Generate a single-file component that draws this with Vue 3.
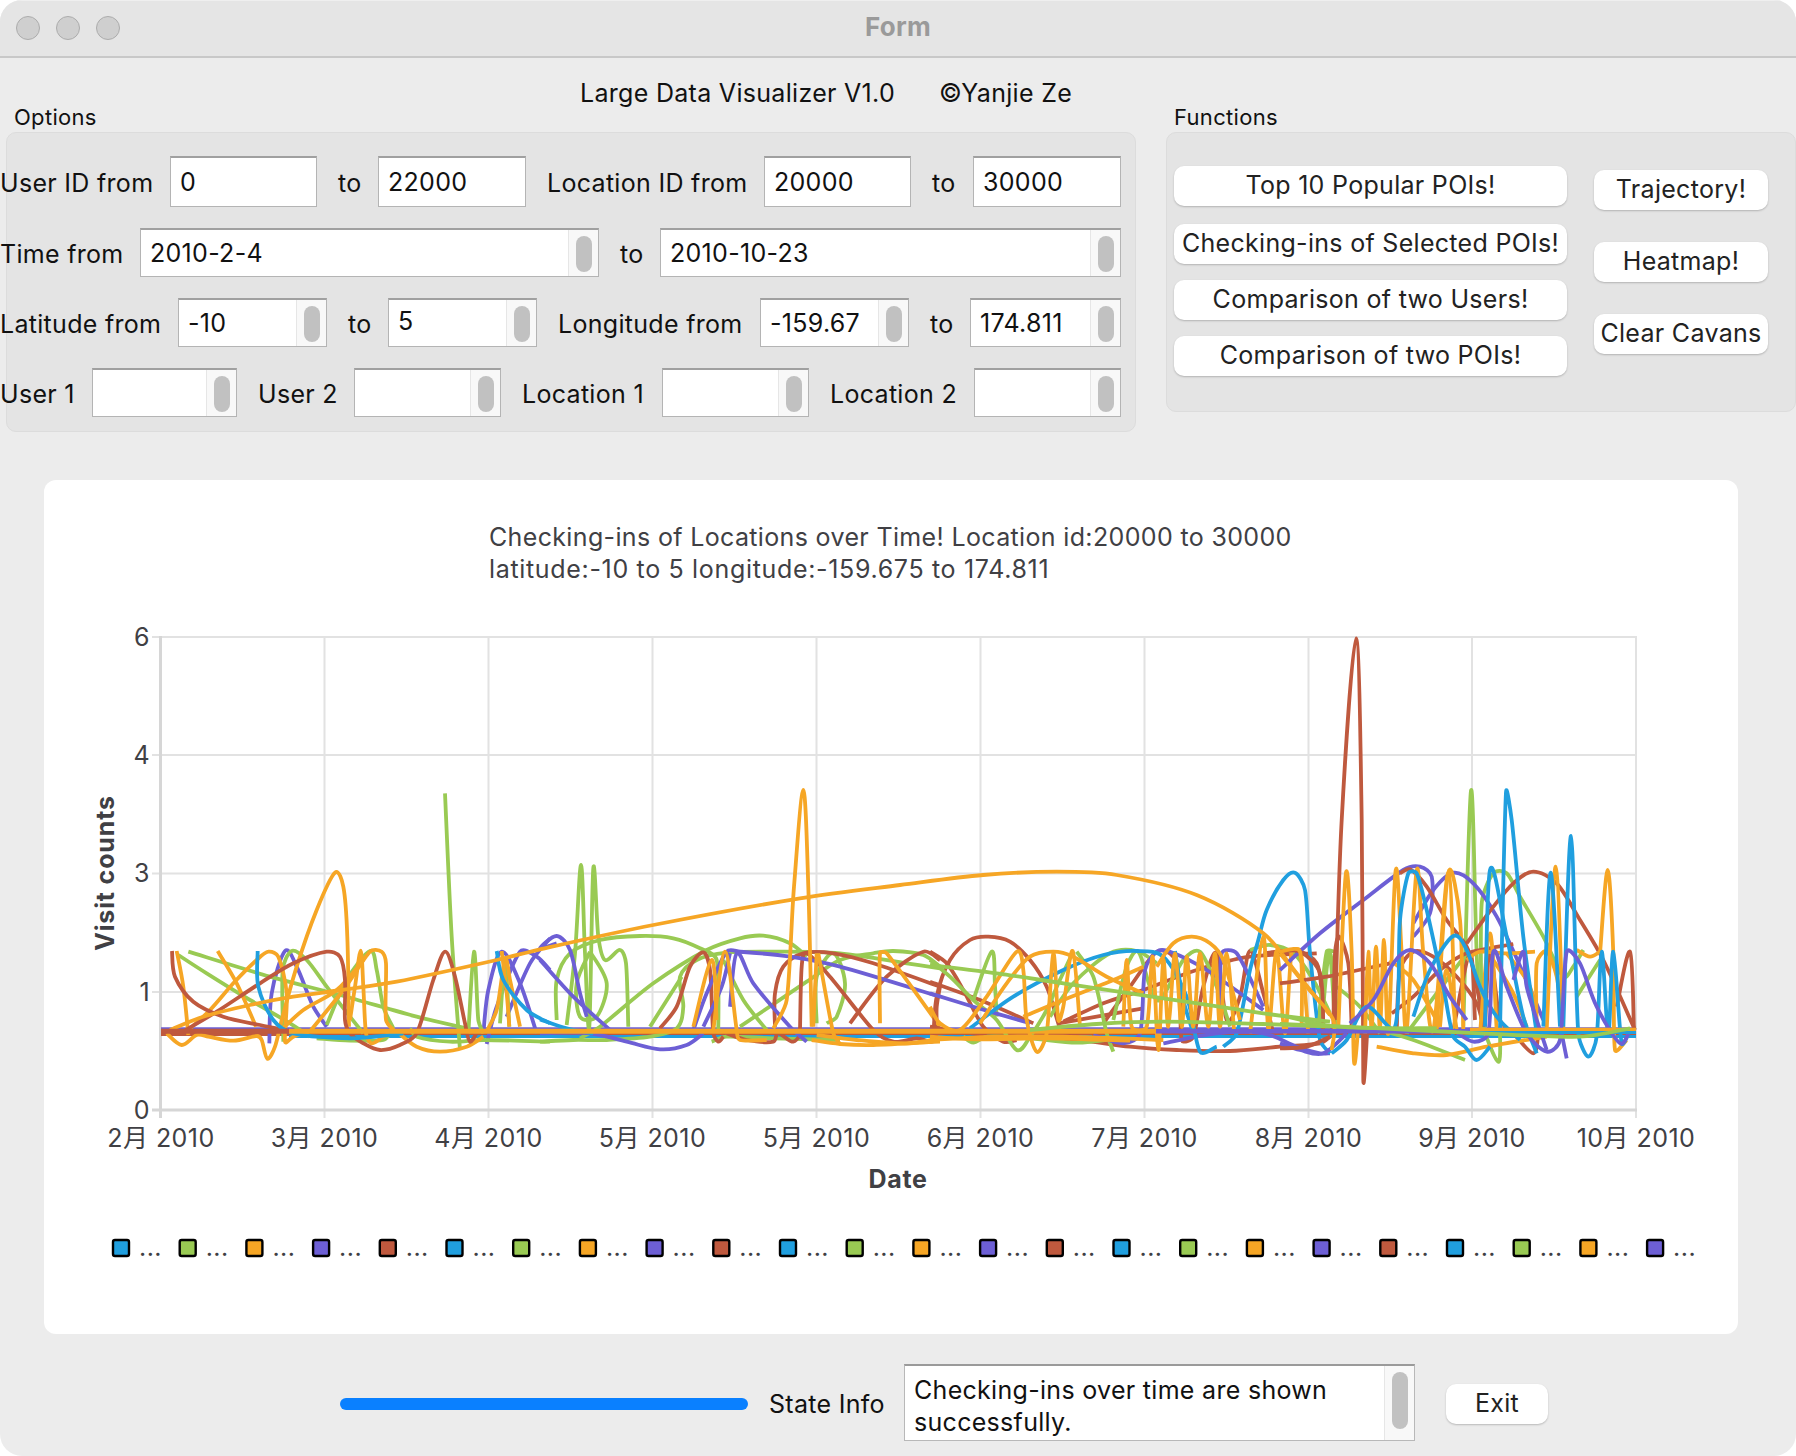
<script setup>
const COL = { b: '#209fdf', g: '#99ca53', o: '#f6a625', p: '#6d5fd5', r: '#bf593e' }
const BASE = [150, 540, 930, 1280]

// Each curve: colour, panel, points in 3x-zoom coordinates of that panel
const raw = [
  // panel 1
  ['p',0,'358,670 365,520 405,393 440,440 490,560 530,620'],
  ['p',0,'1000,640 1015,510 1055,395 1110,490 1160,640'],
  ['p',0,'1010,672 1040,560 1110,395 1160,410 1200,450'],
  ['p',0,'1070,590 1140,430 1200,355'],
  ['g',0,'85,405 170,460 300,540 420,610 480,650'],
  ['g',0,'115,395 360,470 570,525 800,590 950,625'],
  ['g',0,'400,665 398,450 425,393 470,420 530,500 600,590 640,640'],
  ['g',0,'530,615 590,480 660,393 680,450 700,560 730,625'],
  ['g',0,'885,-80 905,350 930,690'],
  ['g',0,'955,640 972,395 985,600 1000,640'],
  ['g',0,'1050,610 1065,430 1078,620'],
  ['g',0,'780,625 800,650 900,665 1000,660 1200,665'],
  ['g',0,'500,655 600,662 700,660 720,640'],
  ['o',0,'50,640 95,675 140,645 175,650 250,662 320,648 335,660 352,716 375,680 395,600 440,440 500,270 555,158 580,200 592,350 597,620'],
  ['o',0,'80,393 100,500 115,645'],
  ['o',0,'203,393 260,490 318,620'],
  ['o',0,'110,634 180,570 250,490 320,420 355,395 385,410 410,520 405,665 430,650 480,634'],
  ['o',0,'390,634 460,570 560,510 640,420'],
  ['o',0,'600,600 615,500 632,392 640,500 648,640 665,670 700,650 740,634'],
  ['o',0,'480,634 580,510 660,395 695,395 708,430 708,600 735,634'],
  ['o',0,'740,634 800,680 870,695 950,680 1000,650'],
  ['o',0,'1010,634 1040,570 1065,420 1080,480 1110,620'],
  ['o',0,'1055,393 1070,520 1078,620'],
  ['r',0,'66,393 75,470 130,545 220,590 330,615 410,630'],
  ['r',0,'100,634 200,575 330,490 430,430 530,395 570,410 585,480 585,600 600,640 640,670 690,690 750,675 800,640 850,480 885,395 915,470 945,610 960,665 985,630'],
  ['b',0,'323,393 325,500 370,600 430,640 600,655 760,640'],
  ['b',0,'1040,393 1060,480 1130,570 1200,610'],
  // panel 2
  ['g',1,'0,665 100,660 200,660 330,650 410,625 430,560 420,470 470,420 560,398 700,395 900,400 1100,430 1200,445'],
  ['g',1,'120,655 180,620 340,490 500,390 600,355 670,347 750,370 800,410'],
  ['g',1,'50,600 50,480 90,400 180,360 300,348 400,355 480,385 530,420 535,640'],
  ['g',1,'80,615 105,400 123,135 135,400 148,620 160,145 175,350 195,420 240,390 258,430 265,620'],
  ['g',1,'150,395 200,490 170,590 120,590 110,490 150,395'],
  ['g',1,'600,620 800,485 900,420 1000,400 1060,393 1150,405 1200,440'],
  ['g',1,'830,610 830,470 880,400 915,490 890,590 860,610'],
  ['g',1,'550,420 610,540 680,630'],
  ['g',1,'330,620 425,470'],
  ['g',1,'515,665 560,650 700,655 900,660'],
  ['r',1,'360,625 410,560 450,440 490,397 510,450 520,640 535,665 550,650'],
  ['r',1,'705,620 705,520 730,440 790,400 880,400 1000,430 1200,500'],
  ['r',1,'780,630 785,440 800,400 870,470 1000,630 1060,665 1130,655 1185,660 1190,560 1200,500'],
  ['r',1,'930,610 1040,470 1150,395 1200,420'],
  ['r',1,'560,640 620,660 700,665 715,640 760,665 790,630'],
  ['p',1,'0,420 100,530 210,630'],
  ['p',1,'0,640 150,640 260,665 360,688 440,675 490,640'],
  ['p',1,'460,630 500,520 560,395 600,395 750,410 900,440 1200,530'],
  ['p',1,'570,560 590,400 640,490 750,620 800,665'],
  ['p',1,'490,620 545,500 570,400'],
  ['p',1,'50,370 0,385 50,348 90,390 120,520 140,590'],
  ['o',1,'700,625 740,540 762,200 790,-90 805,200 815,620'],
  ['o',1,'520,630 555,395 590,630 600,660 680,660'],
  ['o',1,'460,620 515,420 530,600'],
  ['o',1,'830,400 820,620'],
  ['o',1,'835,400 880,640 900,672'],
  ['o',1,'1020,610 1020,400 1040,400 1200,620'],
  ['o',1,'815,660 900,672 1000,675 1200,665'],
  ['o',1,'830,645 950,660 1100,670 1200,655'],
  ['b',1,'0,598 80,625 160,640'],
  // panel 3
  ['r',2,'10,660 20,530 60,420 120,360 175,350 240,365 300,420 350,500 385,610 405,660 430,645 470,665 500,640'],
  ['r',2,'0,395 50,430 100,510 160,620 220,665 260,660'],
  ['r',2,'0,485 150,540 310,610'],
  ['r',2,'400,605 520,550 640,510 800,450 960,410 1160,400'],
  ['r',2,'385,610 500,590 640,565'],
  ['r',2,'520,610 600,500 680,395 730,410 750,500 755,660 790,650 820,500 860,400 890,600 930,530 960,393 1000,520 1030,640'],
  ['r',2,'0,620 200,650 400,655 600,680 740,690 900,693 1050,680 1170,670 1200,650'],
  ['r',2,'1000,400 1100,393 1160,430 1175,520 1180,620'],
  ['g',2,'0,420 60,470 130,540 200,600 260,690 300,650 350,570 385,490 430,394'],
  ['g',2,'130,540 185,395 195,500 200,590'],
  ['g',2,'360,590 430,490 540,400 620,393 680,430'],
  ['g',2,'440,395 490,470 530,640 550,695'],
  ['g',2,'550,600 590,440 625,395 660,500 690,540 760,420 810,395 860,500 900,620'],
  ['g',2,'960,390 1020,375 1090,400 1150,480 1200,580'],
  ['g',2,'1165,610 1190,395 1215,395'],
  ['g',2,'100,650 130,668 170,650 300,655 440,668 560,655'],
  ['p',2,'0,520 130,560 300,610'],
  ['p',2,'490,645 580,670 630,640 645,450 680,395 720,395 830,450 1000,570'],
  ['p',2,'700,670 860,640 1000,640 1100,680 1170,700 1200,700'],
  ['p',2,'870,600 875,400 920,400 1000,560'],
  ['b',2,'120,625 250,530 400,450 520,405 620,393 700,410 770,530 810,695 860,680'],
  ['b',2,'880,680 920,640 960,450 985,360 1010,270 1060,180 1095,158 1125,210 1140,400 1170,660 1200,700'],
  ['b',2,'735,393 760,540 790,640'],
  ['o',0,'60,630 160,590 300,555 430,530 575,510 740,485 1040,420 1170,388 1510,315 1950,235 2250,195 2500,165 2720,155 2900,165 3140,225 3340,340 3440,460 3540,585'],
  ['o',2,'0,560 30,610 90,630 170,530 260,395 280,450 290,600 320,695 350,640 370,400 385,600 400,560 428,393 450,620'],
  ['o',2,'150,610 230,490 300,410 370,395 430,410 530,470 640,520'],
  ['o',2,'280,590 400,540 550,480 640,440'],
  ['o',2,'580,620 590,420 605,620 650,620 668,410 685,690 700,420 715,620 735,400 755,620 770,410 790,620 810,400 835,620 855,400 870,620 890,400 912,630'],
  ['o',2,'680,440 730,370 785,350 840,370 880,420 930,600'],
  ['o',2,'960,640 1000,350 1015,630 1040,393 1065,640 1085,393 1112,393 1135,640'],
  ['o',2,'0,660 200,650 400,650 700,660'],
  ['o',2,'0,650 150,658 350,655 600,662'],
  // panel 4
  ['g',3,'115,620 148,395 175,620'],
  ['g',3,'125,620 148,400 165,620'],
  ['g',3,'550,620 573,-88 590,400 605,600 655,725 660,620'],
  ['g',3,'605,620 605,250 640,160 680,160 720,230 790,350 850,470 880,440 910,390'],
  ['g',3,'890,530 960,420'],
  ['g',3,'300,630 400,660 555,720'],
  ['g',3,'170,500 240,560 300,640'],
  ['g',3,'380,640 500,480 560,400'],
  ['p',3,'0,450 120,340 250,240 370,150 420,140 455,170 450,280 400,350'],
  ['p',3,'400,310 460,210 520,158 580,190 650,290 730,460 790,600'],
  ['p',3,'0,670 60,690 130,700 200,640'],
  ['r',3,'165,600 185,0 228,-545 245,0 250,780 262,630'],
  ['r',3,'160,640 165,400 178,350 205,430 215,620'],
  ['r',3,'360,160 390,148 440,200 500,300 560,380 580,450 610,600'],
  ['r',3,'560,370 640,260 700,190 760,155 830,190 900,300 970,420 1065,630'],
  ['r',3,'335,580 400,530 480,450 560,400 700,372'],
  ['r',3,'350,640 360,450 400,395 460,410 530,470 590,550 610,620'],
  ['r',3,'1010,560 1050,395 1062,630'],
  ['r',3,'520,630 570,400 585,600'],
  ['r',3,'615,620 630,395 660,600 700,640 760,700 775,640'],
  ['r',3,'0,395 60,395 120,460 130,640'],
  ['r',3,'0,490 140,470 330,430'],
  ['r',3,'0,685 80,680 150,650'],
  ['o',3,'175,620 198,158 215,400 222,725 235,620'],
  ['o',3,'255,640 265,395 275,630 288,380 300,630 312,360 325,640 347,150 365,400 380,630 410,150 430,400 460,630 505,158 525,630'],
  ['o',3,'470,630 505,158 540,300 550,630'],
  ['o',3,'600,640 630,340 650,630'],
  ['o',3,'680,400 750,500 770,620'],
  ['o',3,'560,420 600,395 680,400 765,395'],
  ['o',3,'770,620 770,430 800,395 830,470 850,620'],
  ['o',3,'800,630 827,140 850,640'],
  ['o',3,'960,400 983,150 1000,400 1005,690 1040,660'],
  ['o',3,'890,390 930,410 960,395'],
  ['o',3,'290,680 400,700 500,705 620,680 800,650'],
  ['o',3,'0,395 60,395 65,620'],
  ['o',3,'0,400 80,500 160,600 155,690'],
  ['o',3,'330,420 400,480 480,620'],
  ['o',3,'640,420 700,520 740,620'],
  ['o',3,'480,620 500,450 530,630'],
  ['b',3,'155,700 200,660 260,560 345,620 360,300 385,160 410,160 440,270 490,500 520,650 555,680 590,720 630,680'],
  ['b',3,'400,590 450,450 520,348 560,390 600,500 650,590 720,660'],
  ['b',3,'615,620 630,150 680,350 730,590 770,700'],
  ['b',3,'660,630 678,-84 695,0 730,350 770,640'],
  ['b',3,'790,620 812,158 840,620'],
  ['b',3,'850,620 873,48 895,640 925,710 950,650 965,395 985,640 1000,395 1025,670 1050,630'],
  ['p',3,'210,610 280,540 340,430 390,390 450,430 510,530 560,600'],
  ['p',3,'520,630 580,665 625,640 640,395 680,500 740,640 800,695 840,660 860,395 900,430 950,560 1020,670 1050,630'],
  ['p',3,'700,480 730,395 740,500 800,690'],
  ['p',3,'860,715 845,640'],
]

function toPath(pts) {
  let d = `M${pts[0][0]} ${pts[0][1]}`
  for (let i = 0; i < pts.length - 1; i++) {
    const p0 = pts[Math.max(i - 1, 0)]
    const p1 = pts[i]
    const p2 = pts[i + 1]
    const p3 = pts[Math.min(i + 2, pts.length - 1)]
    const seg = Math.hypot(p2[0] - p1[0], p2[1] - p1[1])
    const lim = (a, b) => {
      const dx = b[0] - a[0]
      const dy = b[1] - a[1]
      const len = Math.hypot(dx, dy) || 1
      const k = Math.min(len / 6, seg / 3) / len
      return [dx * k, dy * k]
    }
    const t1 = lim(p0, p2)
    const t2 = lim(p1, p3)
    const f = (n) => n.toFixed(1)
    d += `C${f(p1[0] + t1[0])} ${f(p1[1] + t1[1])} ${f(p2[0] - t2[0])} ${f(p2[1] - t2[1])} ${f(p2[0])} ${f(p2[1])}`
  }
  return d
}

const parse = (panel, s) =>
  s.split(' ').map((q) => {
    const [x, y] = q.split(',').map(Number)
    return [BASE[panel] + x / 3, 820 + y / 3]
  })

const curves = raw.map(([c, panel, s]) => ({ color: COL[c], d: toPath(parse(panel, s)) }))

const flats = [
  { color: COL.p, x1: 161, x2: 1636, y: 1028.5, w: 2.5 },
  { color: COL.r, x1: 161, x2: 1636, y: 1034.5, w: 3 },
  { color: COL.b, x1: 289, x2: 1636, y: 1036.5, w: 3 },
  { color: COL.o, x1: 289, x2: 1156, y: 1031.3, w: 5 },
  { color: COL.r, x1: 161, x2: 289, y: 1031.3, w: 5 },
  { color: COL.p, x1: 1156, x2: 1470, y: 1031.3, w: 4.5 },
  { color: COL.o, x1: 1470, x2: 1636, y: 1029.5, w: 3.5 },
  { color: COL.b, x1: 1470, x2: 1636, y: 1032.5, w: 3 },
]
const overlays = [
  [COL.g, 2, '0,435 200,460 400,490 700,535 1000,580 1200,605'],
  [COL.g, 2, '300,630 500,612 700,605 1000,612 1200,620'],
  [COL.g, 3, '0,585 170,620 470,625'],
  [COL.g, 3, '0,612 300,625 600,640 900,650 1050,625'],
].map(([color, panel, s]) => ({ color, d: toPath(parse(panel, s)) }))

const xTicks = [161, 324.5, 488.5, 652.5, 816.5, 980.5, 1144.5, 1308.5, 1472, 1636]
const xLabels = ['2月 2010', '3月 2010', '4月 2010', '5月 2010', '5月 2010', '6月 2010', '7月 2010', '8月 2010', '9月 2010', '10月 2010']
const yTicks = [
  { y: 637, t: '6' },
  { y: 755, t: '4' },
  { y: 873.5, t: '3' },
  { y: 992, t: '1' },
  { y: 1110, t: '0' },
]
const cycle = [COL.b, COL.g, COL.o, COL.p, COL.r]
const legend = Array.from({ length: 24 }, (_, i) => ({
  x: 112 + i * 66.7,
  color: cycle[i % 5],
}))
</script>

<template>
  <div class="window">
    <header class="titlebar">
      <div class="lights"><i></i><i></i><i></i></div>
      <div class="wintitle">Form</div>
    </header>

    <div class="heading">
      <span>Large Data Visualizer V1.0</span>
      <span>©Yanjie Ze</span>
    </div>

    <div class="panels">
      <section class="group options">
        <div class="grouplabel">Options</div>
        <div class="box optbox">
          <div class="row r1">
            <label class="first">User ID from</label>
            <div class="field">0</div>
            <label>to</label>
            <div class="field">22000</div>
            <label>Location ID from</label>
            <div class="field">20000</div>
            <label>to</label>
            <div class="field">30000</div>
          </div>
          <div class="row r2">
            <label class="first">Time from</label>
            <div class="field spin"><span>2010-2-4</span><b><i></i></b></div>
            <label>to</label>
            <div class="field spin"><span>2010-10-23</span><b><i></i></b></div>
          </div>
          <div class="row r3">
            <label class="first">Latitude from</label>
            <div class="field spin"><span>-10</span><b><i></i></b></div>
            <label>to</label>
            <div class="field spin"><span class="up">5</span><b><i></i></b></div>
            <label>Longitude from</label>
            <div class="field spin"><span>-159.67</span><b><i></i></b></div>
            <label>to</label>
            <div class="field spin"><span>174.811</span><b><i></i></b></div>
          </div>
          <div class="row r4">
            <label class="first">User 1</label>
            <div class="field spin"><span></span><b><i></i></b></div>
            <label>User 2</label>
            <div class="field spin"><span></span><b><i></i></b></div>
            <label>Location 1</label>
            <div class="field spin"><span></span><b><i></i></b></div>
            <label>Location 2</label>
            <div class="field spin"><span></span><b><i></i></b></div>
          </div>
        </div>
      </section>

      <section class="group functions">
        <div class="grouplabel">Functions</div>
        <div class="box fnbox">
          <div class="col left">
            <button>Top 10 Popular POIs!</button>
            <button>Checking-ins of Selected POIs!</button>
            <button>Comparison of two Users!</button>
            <button>Comparison of two POIs!</button>
          </div>
          <div class="col right">
            <button>Trajectory!</button>
            <button>Heatmap!</button>
            <button>Clear Cavans</button>
          </div>
        </div>
      </section>
    </div>

    <div class="card">
      <svg class="chart" width="1694" height="854" viewBox="44 480 1694 854">
        <text class="ctitle" x="489" y="546">Checking-ins of Locations over Time! Location id:20000 to 30000</text>
        <text class="ctitle second" x="489" y="578">latitude:-10 to 5 longitude:-159.675 to 174.811</text>

        <g stroke="#e2e2e2" stroke-width="2">
          <line v-for="t in yTicks" :key="t.y" x1="152" x2="1637" :y1="t.y" :y2="t.y" />
          <line v-for="x in xTicks" :key="x" :x1="x" :x2="x" y1="637" y2="1118" />
        </g>
        <line x1="160.5" x2="160.5" y1="636" y2="1118" stroke="#d6d6d6" stroke-width="3" />
        <line x1="152" x2="1637" y1="1110" y2="1110" stroke="#d6d6d6" stroke-width="3" />

        <g fill="none" stroke-width="3.8" stroke-linejoin="round">
          <line v-for="(f, i) in flats.slice(0, 3)" :key="'a' + i" :x1="f.x1" :x2="f.x2" :y1="f.y" :y2="f.y" :stroke="f.color" :stroke-width="f.w" />
          <path v-for="(c, i) in curves" :key="i" :d="c.d" :stroke="c.color" />
          <line v-for="(f, i) in flats.slice(3)" :key="'b' + i" :x1="f.x1" :x2="f.x2" :y1="f.y" :y2="f.y" :stroke="f.color" :stroke-width="f.w" />
          <path v-for="(c, i) in overlays" :key="'o' + i" :d="c.d" :stroke="c.color" />
        </g>

        <text v-for="t in yTicks" :key="'y' + t.t" class="tick" x="150" :y="t.y + 8.5" text-anchor="end">{{ t.t }}</text>
        <text v-for="(l, i) in xLabels" :key="'x' + i" class="tick" :x="xTicks[i]" y="1147" text-anchor="middle">{{ l }}</text>
        <text class="axis date" x="898" y="1188" text-anchor="middle">Date</text>
        <text class="axis visit" text-anchor="middle" transform="translate(114 873) rotate(-90)">Visit counts</text>

        <g v-for="(l, i) in legend" :key="'l' + i">
          <rect :x="l.x + 1" y="1240" width="16" height="16" rx="2" :fill="l.color" stroke="#000" stroke-width="2.4" />
          <text class="tick" :x="l.x + 27" y="1256">...</text>
        </g>
      </svg>
    </div>

    <footer class="footer">
      <div class="progress"></div>
      <div class="state">State Info</div>
      <div class="infobox">
        <div class="infotext">Checking-ins over time are shown successfully.</div>
        <b><i></i></b>
      </div>
      <button class="exit">Exit</button>
    </footer>
  </div>
</template>

<style>
html, body { margin: 0; background: #fff; }
</style>

<style scoped>
.window {
  width: 1796px;
  height: 1456px;
  background: #ececec;
  border-radius: 22px;
  overflow: hidden;
  display: flex;
  flex-direction: column;
  font-family: Inter, "Noto Sans CJK SC", sans-serif;
  font-size: 25px;
  letter-spacing: 0.3px;
  color: #111;
}
.titlebar {
  height: 55px;
  flex: none;
  background: #e5e5e5;
  border-top: 1px solid #efefef;
  border-bottom: 2px solid #c8c8c8;
  box-sizing: content-box;
  position: relative;
  display: flex;
  align-items: center;
  justify-content: center;
}
.lights {
  position: absolute;
  left: 16px;
  top: 15px;
  display: flex;
  gap: 16px;
}
.lights i {
  width: 22px;
  height: 22px;
  border-radius: 50%;
  background: #cfcfcf;
  border: 1px solid #acacac;
}
.wintitle {
  font-weight: 700;
  font-size: 26px;
  color: #9a9a9a;
  margin-top: -4px;
}
.heading {
  height: 48px;
  flex: none;
  box-sizing: border-box;
  padding: 20px 0 0 580px;
  display: flex;
  gap: 44px;
  line-height: 30px;
  align-items: flex-start;
}
.panels {
  display: flex;
  height: 326px;
  flex: none;
}
.grouplabel {
  height: 26px;
  line-height: 22px;
  font-size: 22px;
  padding-left: 8px;
}
.options {
  margin-left: 6px;
  width: 1130px;
}
.functions {
  margin-left: 30px;
  width: 630px;
}
.box {
  box-sizing: border-box;
  background: #e4e4e4;
  border: 1px solid #dcdcdc;
  border-radius: 10px;
}
.optbox {
  height: 300px;
  padding-top: 23px;
  display: flex;
  flex-direction: column;
  gap: 21px;
}
.row {
  display: grid;
  margin-left: -7px;
  width: 1121px;
  height: 49px;
  align-items: stretch;
}
.r1 {
  height: 51px;
  grid-template-columns: 170px 147px 61px 148px 238px 147px 62px 148px;
}
.r2 { grid-template-columns: 140px 459px 61px 461px; }
.r3 { grid-template-columns: 178px 149px 61px 149px 223px 149px 61px 151px; }
.r4 { grid-template-columns: 92px 145px 117px 147px 161px 147px 165px 147px; }
label {
  padding-left: 21px;
  display: flex;
  align-items: center;
  padding-top: 3px;
  white-space: nowrap;
}
label.first { padding-left: 0; }
.field {
  background: #fff;
  border: 1px solid #b4b4b4;
  border-top: 2px solid #a0a0a0;
  box-sizing: border-box;
  padding-left: 9px;
  display: flex;
  align-items: center;
  position: relative;
}
.field.spin { padding-right: 30px; }
.up { margin-top: -4px; }
.field > b,
.infobox > b {
  position: absolute;
  right: 0;
  top: 0;
  bottom: 0;
  width: 30px;
  background: #f8f8f8;
  border-left: 1px solid #e6e6e6;
  box-sizing: border-box;
  display: flex;
  justify-content: center;
  padding-top: 6px;
}
.field > b i {
  width: 16px;
  height: 36px;
  border-radius: 8px;
  background: #c1c1c1;
}
.fnbox {
  height: 280px;
  display: flex;
  padding-left: 7px;
  gap: 27px;
}
.col {
  display: flex;
  flex-direction: column;
  align-items: stretch;
}
.col.left {
  width: 393px;
  padding-top: 33px;
  gap: 16px;
}
.col.left button:first-child { margin-bottom: 2px; }
.col.right {
  width: 174px;
  padding-top: 37px;
  gap: 32px;
}
button {
  height: 40px;
  box-sizing: border-box;
  border: none;
  background: #fff;
  border-radius: 10px;
  box-shadow: 0 1px 2px rgba(0, 0, 0, 0.22);
  font: inherit;
  letter-spacing: inherit;
  color: #222;
  padding: 0 0 2px;
  white-space: nowrap;
}
.card {
  flex: none;
  margin: 48px 0 0 44px;
  width: 1694px;
  height: 854px;
  background: #fff;
  border-radius: 12px;
}
.chart { display: block; }
.ctitle { font-size: 25px; fill: #404044; letter-spacing: 0.35px; }
.ctitle.second { letter-spacing: 0.67px; }
.tick { font-size: 25px; fill: #404044; letter-spacing: 0.45px; }
.axis { font-size: 25px; font-weight: 700; fill: #404044; }
.date { letter-spacing: 0.6px; }
.visit { letter-spacing: 0.85px; }
.footer {
  flex: none;
  height: 77px;
  margin-top: 30px;
  padding-left: 340px;
  display: flex;
  align-items: center;
}
.progress {
  width: 408px;
  height: 12px;
  border-radius: 6px;
  background: #0a80ff;
  margin-top: 3px;
}
.state { margin: 3px 0 0 21px; width: 135px; white-space: nowrap; }
.infobox {
  width: 511px;
  height: 77px;
  box-sizing: border-box;
  background: #fff;
  border: 1px solid #b8b8b8;
  border-top: 2px solid #9a9a9a;
  position: relative;
  padding: 8px 34px 0 9px;
}
.infobox > b i {
  width: 16px;
  height: 57px;
  border-radius: 8px;
  background: #c1c1c1;
}
.infotext { line-height: 32px; }
.exit {
  width: 102px;
  margin: 3px 0 0 31px;
}
</style>
